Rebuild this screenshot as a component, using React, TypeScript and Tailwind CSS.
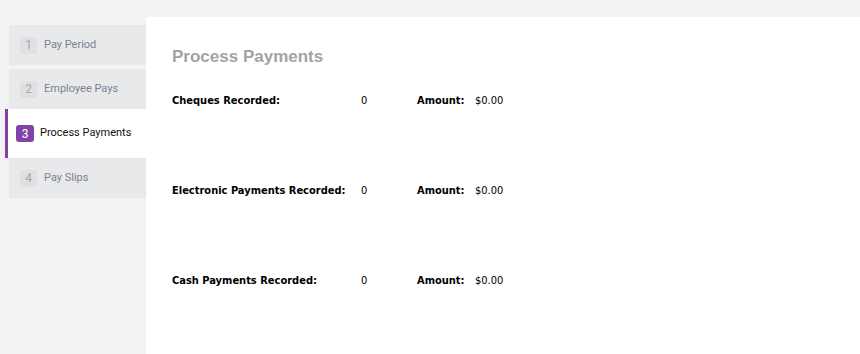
const steps = [
  { n: 1, label: 'Pay Period' },
  { n: 2, label: 'Employee Pays' },
  { n: 3, label: 'Process Payments', active: true },
  { n: 4, label: 'Pay Slips' },
];

const rows = [
  { label: 'Cheques Recorded:', count: '0', amount: '$0.00' },
  { label: 'Electronic Payments Recorded:', count: '0', amount: '$0.00' },
  { label: 'Cash Payments Recorded:', count: '0', amount: '$0.00' },
];

export default function App() {
  return (
    <div className="flex h-[354px] w-[860px] overflow-hidden bg-[#f2f3f5] pt-[17px]">
      {/* Steps */}
      <div className="w-[146px] shrink-0 pt-[8px] font-['Roboto',sans-serif] text-[11px]">
        {steps.map((s) =>
          s.active ? (
            <div
              key={s.n}
              className="flex h-[49px] items-center border-l-[3px] border-[#8342a8] bg-white pl-[8px] ml-[5px] shadow-[0_1px_2px_rgba(0,0,0,0.08)]"
            >
              <span className="flex h-[17px] w-[18px] items-center justify-center rounded-[3px] bg-[#8342a8] text-[12px] text-white">
                {s.n}
              </span>
              <span className="ml-[6px] text-[#111]">{s.label}</span>
            </div>
          ) : (
            <div
              key={s.n}
              className={`ml-[9px] flex h-[40px] items-center bg-[#e8e9eb] pl-[11px] ${s.n === 1 ? 'mb-[4px]' : ''}`}
            >
              <span className="flex h-[17px] w-[17px] items-center justify-center rounded-[3px] bg-[#dfe0e2] text-[12px] text-[#a5a7ab]">
                {s.n}
              </span>
              <span className="ml-[7px] text-[#7d8190]">{s.label}</span>
            </div>
          )
        )}
      </div>

      {/* Panel */}
      <div className="flex-1 rounded-tl-[4px] bg-white pl-[26px] pt-[28px]">
        <h1 className="font-['Liberation_Sans',Arial,sans-serif] text-[17px] font-bold leading-[24px] text-[#a3a3a3]">
          Process Payments
        </h1>
        <div className="mt-[24px] flex flex-col gap-[74px] font-['DejaVu_Sans_Condensed','DejaVu_Sans',sans-serif] text-[11px] leading-[16px] text-black">
          {rows.map((r) => (
            <div key={r.label} className="flex">
              <span className="w-[189px] font-bold">{r.label}</span>
              <span className="w-[56px]">{r.count}</span>
              <span className="w-[58px] font-bold">Amount:</span>
              <span>{r.amount}</span>
            </div>
          ))}
        </div>
      </div>
    </div>
  );
}
